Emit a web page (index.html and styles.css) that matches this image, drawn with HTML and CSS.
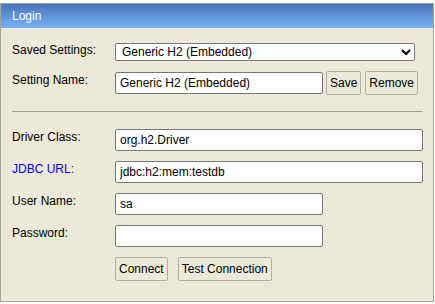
FILE: index.html
```html
<html lang="en">
<head>
    <meta charset="UTF-8">
    <title>H2 Console</title>
    <link rel="stylesheet" href="styles.css">
</head>
<body>

<div class="login-box">
    <div class="login-head">Login</div>

    <form class="login-form">
        <div class="row first">
            <label for="setting">Saved Settings:</label>
            <select id="setting" class="wide-select">
                <option>Generic H2 (Embedded)</option>
            </select>
        </div>

        <div class="row name-row">
            <label for="name">Setting Name:</label>
            <input type="text" id="name" class="short" value="Generic H2 (Embedded)">
            <button type="button" class="btn save">Save</button>
            <button type="button" class="btn">Remove</button>
        </div>

        <hr class="divider">

        <div class="row">
            <label for="driver">Driver Class:</label>
            <input type="text" id="driver" class="long" value="org.h2.Driver">
        </div>

        <div class="row">
            <label for="url" class="link-label">JDBC URL:</label>
            <input type="text" id="url" class="long" value="jdbc:h2:mem:testdb">
        </div>

        <div class="row">
            <label for="user">User Name:</label>
            <input type="text" id="user" class="short" value="sa">
        </div>

        <div class="row">
            <label for="password">Password:</label>
            <input type="password" id="password" class="short">
        </div>

        <div class="row actions">
            <button type="button" class="btn">Connect</button>
            <button type="button" class="btn test">Test Connection</button>
        </div>
    </form>
</div>

</body>
</html>
```

FILE: styles.css
```css
body {
    margin: 0;
    padding: 0;
    background: white;
    font-family: "Liberation Sans", Arial, sans-serif;
    font-size: 12px;
    color: #000;
}
.login-box {
    box-sizing: border-box;
    width: 434px;
    height: 299px;
    margin-top: 3px;
    border: 1px solid #a5a493;
    background: #ece9d8;
}
.login-head {
    height: 24px;
    line-height: 24px;
    padding-left: 11px;
    color: white;
    background: linear-gradient(#4a74bd, #77b2f3);
}
.login-form {
    margin: 0;
    padding: 15px 0 0 11px;
}
.row {
    display: flex;
    align-items: flex-start;
    margin-top: 10px;
}
.row.first {
    margin-top: 0;
}
.row.name-row {
    margin-top: 11px;
}
.row label {
    width: 103px;
    flex-shrink: 0;
    padding-top: 1px;
    line-height: 14px;
}
.row.first label {
    padding-top: 0;
}
.link-label {
    color: #0000ff;
}
.row input,
.row select {
    box-sizing: border-box;
    margin: 0;
    font-family: "Liberation Sans", Arial, sans-serif;
    font-size: 12px;
    color: #000;
    background: white;
    border: 1px solid #767676;
    border-radius: 2px;
}
.row input {
    height: 22px;
    padding: 0 4px;
}
.wide-select {
    width: 300px;
    height: 18px;
    padding: 0 2px;
}
.short {
    width: 208px;
}
.long {
    width: 308px;
}
.btn {
    box-sizing: border-box;
    height: 24px;
    margin: -1px 0 0 4px;
    padding: 0 3px;
    font-family: "Liberation Sans", Arial, sans-serif;
    font-size: 12px;
    color: #000;
    background: #ece9d8;
    border: 1px solid #b0ae9f;
    border-radius: 2px;
}
.btn.save {
    margin-left: 3px;
}
.divider {
    margin: 16px 11px 0 0;
    border: 0;
    border-top: 1px solid #a09f97;
    height: 0;
}
.divider + .row {
    margin-top: 17px;
}
.actions {
    padding-left: 103px;
}
.actions .btn {
    margin: 0;
}
.actions .test {
    margin-left: 10px;
}
```
